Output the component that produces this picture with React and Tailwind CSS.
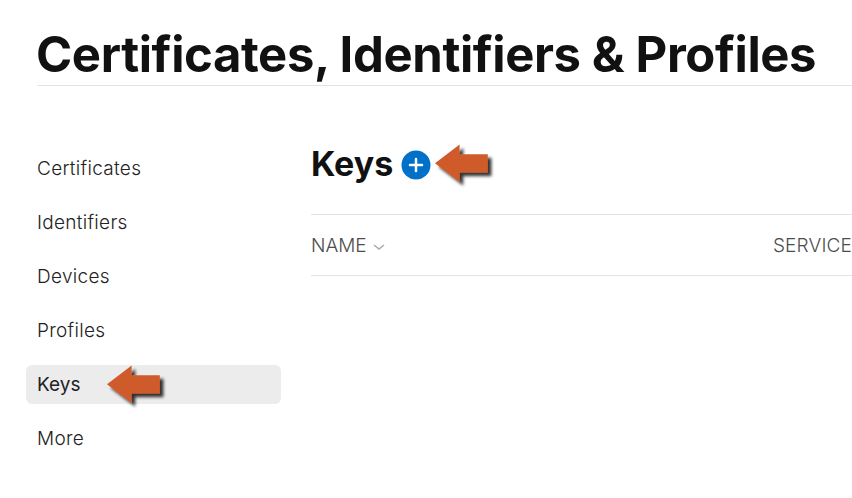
const Arrow = ({ className }) => (
  <svg width="62" height="46" viewBox="0 0 62 46" className={className}>
    <defs>
      <filter id="arrowShadow" x="-10%" y="-10%" width="130%" height="140%">
        <feDropShadow dx="3.6" dy="3.6" stdDeviation="1.5" floodColor="#000" floodOpacity="0.8" />
      </filter>
    </defs>
    <path d="M0 19.3L24.6 0.6V10.3H52.8V28.6H24.6V38Z" fill="#cf5a2b" filter="url(#arrowShadow)" />
  </svg>
);

const items = ["Certificates", "Identifiers", "Devices", "Profiles", "Keys", "More"];

export default function App() {
  return (
    <div className="h-[498px] w-[852px] overflow-hidden bg-white font-['Inter',sans-serif] text-[#222]">
      <header className="ml-[37px] h-[86px] border-b border-[#e3e3e3] pt-[24px]">
        <h1 className="-ml-px whitespace-nowrap text-[49px] leading-[61px] font-bold tracking-[-0.39px] text-[#111]">
          Certificates, Identifiers &amp; Profiles
        </h1>
      </header>
      <div className="flex">
        <nav className="ml-[26px] flex w-[255px] shrink-0 flex-col gap-[15px] pt-[63px]">
          {items.map((t) => (
            <div
              key={t}
              className={
                t === "Keys"
                  ? "flex h-[39px] items-center rounded-md bg-[#ececec] pt-px pl-[11px] text-[19px] text-[#222]"
                  : "flex h-[39px] items-center pt-px pl-[11px] text-[19px] font-light tracking-[0.3px]"
              }
            >
              <span className={t === "Keys" ? "w-[70px]" : ""}>{t}</span>
              {t === "Keys" && <Arrow className="-my-4 mt-[-11px] shrink-0" />}
            </div>
          ))}
        </nav>
        <main className="ml-[30px] min-w-0 flex-1">
          <div className="flex h-[128px] items-center pt-[28px]">
            <h2 className="w-[82px] text-[34px] leading-[44px] font-bold text-[#111]">Keys</h2>
            <svg width="30" height="30" viewBox="0 0 30 30" className="mt-[2px] ml-[8px] shrink-0">
              <circle cx="15" cy="15" r="14.5" fill="#0070c9" />
              <path d="M15 9v12M9 15h12" stroke="#fff" strokeWidth="2.5" strokeLinecap="round" />
            </svg>
            <Arrow className="mt-[6px] ml-[4px] shrink-0" />
          </div>
          <div className="flex h-[62px] items-center justify-between border-y border-[#e3e3e3] pt-[2px] text-[19px] font-light text-[#4d4d4d]">
            <span className="flex items-center gap-[6px]">
              NAME
              <svg width="12" height="8" viewBox="0 0 12 8" fill="none" className="mt-px">
                <path d="M1 2L6 6L11 2" stroke="#aaa" strokeWidth="1.5" />
              </svg>
            </span>
            <span className="tracking-[0.15px]">SERVICE</span>
          </div>
        </main>
      </div>
    </div>
  );
}
